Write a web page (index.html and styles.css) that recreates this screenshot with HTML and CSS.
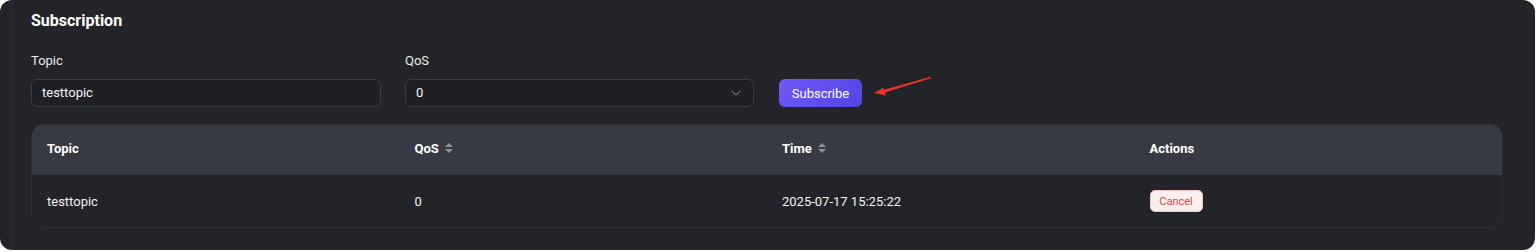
FILE: index.html
```html
<!DOCTYPE html>
<html lang="en">
<head>
<meta charset="UTF-8">
<meta name="viewport" content="width=device-width, initial-scale=1.0">
<title>Subscription</title>
<link rel="stylesheet" href="styles.css">
</head>
<body>
<div class="card">
    <div class="inner">
        <h2 class="title">Subscription</h2>

        <div class="form">
            <div class="field">
                <label class="label">Topic</label>
                <div class="input">testtopic</div>
            </div>
            <div class="field">
                <label class="label">QoS</label>
                <div class="input select">
                    <span>0</span>
                    <svg class="chevron" width="10" height="6" viewBox="0 0 10 6"><path d="M0.5 0.8 L5 5 L9.5 0.8" fill="none" stroke="#8a8c93" stroke-width="1"/></svg>
                </div>
            </div>
            <div class="action">
                <button class="btn-subscribe">Subscribe</button>
                <svg class="arrow" width="60" height="20" viewBox="0 0 60 20"><polygon points="0,16 10,10.5 9,13 56,0 57,1.2 11,15.5 12,18.5" fill="#e8322a"/></svg>
            </div>
        </div>

        <div class="table">
            <div class="row head">
                <div class="cell">Topic</div>
                <div class="cell">QoS <span class="sort"></span></div>
                <div class="cell">Time <span class="sort"></span></div>
                <div class="cell">Actions</div>
            </div>
            <div class="row">
                <div class="cell">testtopic</div>
                <div class="cell">0</div>
                <div class="cell">2025-07-17 15:25:22</div>
                <div class="cell"><button class="btn-cancel">Cancel</button></div>
            </div>
        </div>
    </div>
</div>
</body>
</html>
```

FILE: styles.css
```css
body {
    margin: 0;
    background-color: #ffffff;
    font-family: Roboto, "Liberation Sans", sans-serif;
    color: #f2f3f5;
}
.card {
    width: 1535px;
    height: 250px;
    box-sizing: border-box;
    background-color: #232429;
    border-radius: 12px;
    padding-left: 12px;
    padding-right: 12px;
}
.inner {
    height: 100%;
    box-sizing: border-box;
    border-left: 1px solid #2d2f35;
    padding: 9px 20px 0 18px;
}
.title {
    margin: 0;
    font-size: 16px;
    line-height: 24px;
    font-weight: 700;
    color: #ffffff;
}
.form {
    display: flex;
    align-items: flex-end;
    gap: 24px;
    margin-top: 18px;
}
.field {
    display: flex;
    flex-direction: column;
    gap: 8px;
}
.label {
    font-size: 13px;
    line-height: 20px;
    color: #e9eaec;
}
.input {
    width: 350px;
    height: 28px;
    box-sizing: border-box;
    border: 1px solid #3a3c43;
    border-radius: 6px;
    background-color: #1f2024;
    padding: 0 10px;
    font-size: 13px;
    line-height: 26px;
    color: #f4f5f7;
}
.select {
    width: 349px;
    display: flex;
    justify-content: space-between;
    align-items: center;
}
.chevron {
    margin-right: 2px;
}
.action {
    display: flex;
    align-items: center;
    gap: 12px;
    margin-left: 1px;
}
.btn-subscribe {
    width: 83px;
    height: 28px;
    border: none;
    border-radius: 6px;
    background: linear-gradient(135deg, #7158f7, #4f45e4);
    color: #ffffff;
    font-family: Roboto, "Liberation Sans", sans-serif;
    font-size: 13px;
    cursor: pointer;
}
.arrow {
    margin-top: -12px;
}
.table {
    margin-top: 17px;
    border: 1px solid #2c2e34;
    border-radius: 12px;
    overflow: hidden;
}
.row {
    display: grid;
    grid-template-columns: repeat(4, 1fr);
    height: 52px;
    align-items: center;
    font-size: 13px;
}
.row.head {
    height: 50px;
    box-sizing: border-box;
    padding-bottom: 4px;
    background-color: #373a42;
    font-weight: 700;
    color: #ffffff;
}
.cell {
    padding-left: 15px;
    display: flex;
    align-items: center;
    gap: 6px;
}
.sort {
    display: inline-flex;
    flex-direction: column;
    gap: 2px;
}
.sort::before, .sort::after {
    content: "";
    border-left: 4px solid transparent;
    border-right: 4px solid transparent;
}
.sort::before {
    border-bottom: 4px solid #8d9099;
}
.sort::after {
    border-top: 4px solid #8d9099;
}
.btn-cancel {
    width: 53px;
    height: 22px;
    border: 1px solid #f3c6c6;
    border-radius: 5px;
    background-color: #fdeeee;
    color: #d44a45;
    font-family: Roboto, "Liberation Sans", sans-serif;
    font-size: 11px;
    padding: 0;
    cursor: pointer;
}
```
